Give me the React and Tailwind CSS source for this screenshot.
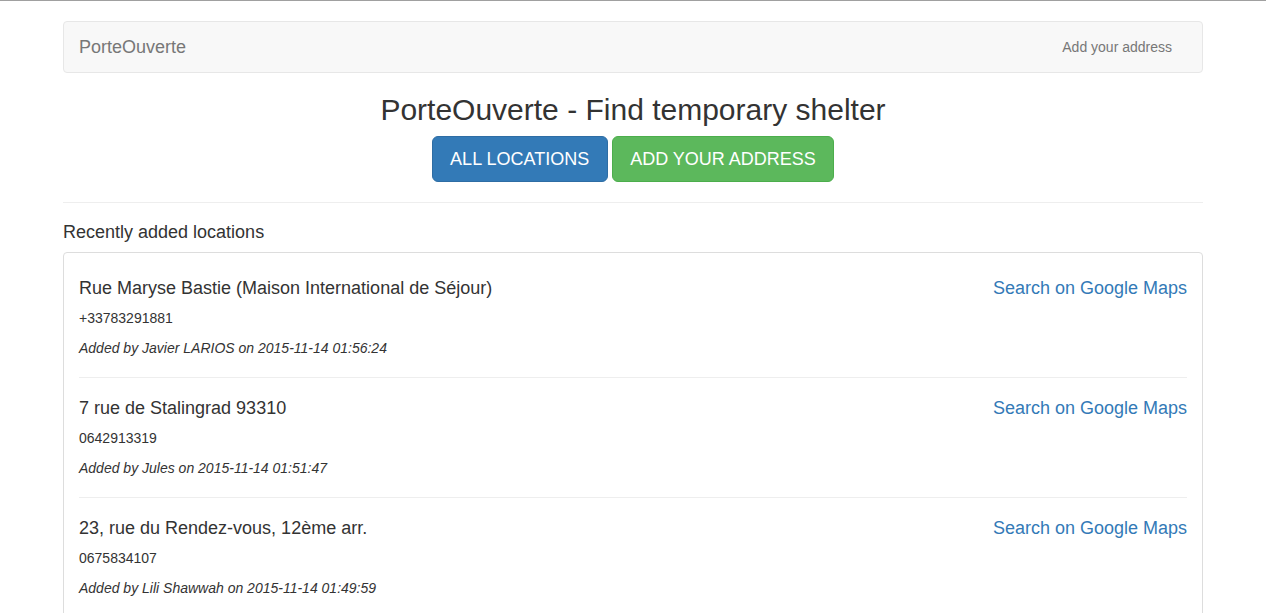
import React from "react";

const items = [
  {
    title: "Rue Maryse Bastie (Maison International de Séjour)",
    phone: "+33783291881",
    added: "Added by Javier LARIOS on 2015-11-14 01:56:24",
  },
  {
    title: "7 rue de Stalingrad 93310",
    phone: "0642913319",
    added: "Added by Jules on 2015-11-14 01:51:47",
  },
  {
    title: "23, rue du Rendez-vous, 12ème arr.",
    phone: "0675834107",
    added: "Added by Lili Shawwah on 2015-11-14 01:49:59",
  },
];

export default function App() {
  return (
    <div
      className="min-h-screen bg-white border-t border-[#a0a0a0] text-[#333] text-[14px] leading-[20px]"
      style={{ fontFamily: '"Liberation Sans", Arial, sans-serif' }}
    >
      <div className="mx-auto w-[1140px]">
        {/* Navbar */}
        <div className="mt-[20px] h-[52px] border border-[#e7e7e7] bg-[#f8f8f8] rounded-[4px] flex items-center justify-between pl-[15px] pr-[30px]">
          <span className="text-[18px] leading-[20px] text-[#777]">PorteOuverte</span>
          <span className="text-[14px] leading-[20px] text-[#777]">Add your address</span>
        </div>

        {/* Title */}
        <h2 className="mt-[20px] mb-[10px] text-center text-[30px] leading-[33px] text-[#333]">
          PorteOuverte - Find temporary shelter
        </h2>

        <div className="flex justify-center gap-[4px]">
          <button className="h-[46px] px-[17.5px] border border-[#2e6da4] bg-[#337ab7] text-white text-[18px] leading-[24px] rounded-[6px] uppercase">
            All locations
          </button>
          <button className="h-[46px] px-[17.5px] border border-[#4cae4c] bg-[#5cb85c] text-white text-[18px] leading-[24px] rounded-[6px] uppercase">
            Add your address
          </button>
        </div>

        <div className="mt-[20px] mb-[19px] border-t border-[#eee]" />

        <h4 className="mb-[10px] text-[18px] leading-[20px] text-[#333]">Recently added locations</h4>

        <div className="border border-[#ddd] rounded-[4px] bg-white px-[15px] pt-[15px] pb-[15px] flex flex-col">
          {items.map((it, i) => (
            <div
              key={i}
              className={`flex flex-col pb-[19px] ${i === 0 ? "pt-[10px]" : "pt-[20px]"} ${
                i < items.length - 1 ? "border-b border-[#eee]" : ""
              }`}
            >
              <div className="flex justify-between text-[18px] leading-[20px]">
                <span className="text-[#333]">{it.title}</span>
                <span className="text-[#337ab7]">Search on Google Maps</span>
              </div>
              <p className="mt-[10px]">{it.phone}</p>
              <p className="mt-[10px] italic">{it.added}</p>
            </div>
          ))}
        </div>
      </div>
    </div>
  );
}
